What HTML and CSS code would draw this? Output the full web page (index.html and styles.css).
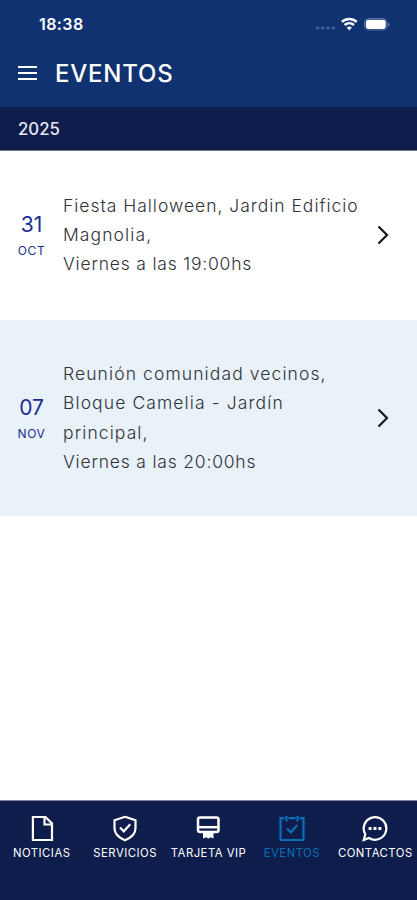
FILE: index.html
```html
<!DOCTYPE html>
<html lang="es">
<head>
    <meta charset="UTF-8">
    <meta name="viewport" content="width=device-width, initial-scale=1.0">
    <title>Eventos</title>
    <link rel="stylesheet" href="styles.css">
</head>
<body>
    <header class="header">
        <div class="status-bar">
            <span class="time">18:38</span>
            <svg class="status-icons" width="74" height="16" viewBox="0 0 74 16">
                <g fill="#41609a">
                    <rect x="0" y="10.5" width="3.2" height="3" rx="1"/>
                    <rect x="5.2" y="10.5" width="3.2" height="3" rx="1"/>
                    <rect x="10.4" y="10.5" width="3.2" height="3" rx="1"/>
                    <rect x="15.6" y="10.5" width="3.2" height="3" rx="1"/>
                </g>
                <g fill="none" stroke="#fff" stroke-width="2.4">
                    <path d="M25.9 5.8a11 11 0 0 1 14.8 0"/>
                    <path d="M28.6 9a7.2 7.2 0 0 1 9.4 0"/>
                </g>
                <path d="M30.7 11.5a4 4 0 0 1 5.2 0l-2.6 2.9z" fill="#fff"/>
                <rect x="48.5" y="2.5" width="22.5" height="11.5" rx="4" fill="none" stroke="#5670a3"/>
                <rect x="49.8" y="3.7" width="20" height="9.2" rx="2.8" fill="#fff"/>
                <path d="M72.3 6.5v4.2c1.5-.8 1.5-3.4 0-4.2z" fill="#8fa1c6"/>
            </svg>
        </div>
        <div class="title-bar">
            <button class="menu-btn" aria-label="Menú">
                <span></span>
                <span></span>
                <span></span>
            </button>
            <h1>EVENTOS</h1>
        </div>
    </header>

    <div class="year">2025</div>

    <main class="events">
        <a class="event">
            <div class="date">
                <span class="day">31</span>
                <span class="month">OCT</span>
            </div>
            <div class="info">
                <p class="long">Fiesta Halloween, Jardin Edificio</p>
                <p>Magnolia,</p>
                <p class="hour">Viernes a las 19:00hs</p>
            </div>
            <svg class="arrow" width="12" height="20" viewBox="0 0 12 20"><path d="M1.5 1.5L10 10l-8.5 8.5"/></svg>
        </a>
        <a class="event event-alt">
            <div class="date">
                <span class="day">07</span>
                <span class="month">NOV</span>
            </div>
            <div class="info">
                <p>Reunión comunidad vecinos,</p>
                <p>Bloque Camelia - Jardín</p>
                <p>principal,</p>
                <p class="hour">Viernes a las 20:00hs</p>
            </div>
            <svg class="arrow" width="12" height="20" viewBox="0 0 12 20"><path d="M1.5 1.5L10 10l-8.5 8.5"/></svg>
        </a>
    </main>

    <nav class="tabs">
        <a class="tab">
            <svg width="28" height="28" viewBox="0 0 28 28">
                <path d="M4.9 3H17.5L24 9.500V26H4.900z"/>
                <path d="M16.5 3v7.500H24"/>
            </svg>
            <span>NOTICIAS</span>
        </a>
        <a class="tab">
            <svg width="28" height="28" viewBox="0 0 28 28">
                <path d="M14 2.800l10.500 3.500v8c0 5.500-4.500 9.500-10.500 12-6-2.500-10.500-6.500-10.500-12v-8z"/>
                <path d="M9 13.500l3.800 3.800 6.400-7"/>
            </svg>
            <span>SERVICIOS</span>
        </a>
        <a class="tab">
            <svg width="28" height="28" viewBox="0 0 28 28">
                <rect x="4" y="3.500" width="20.500" height="14.500" rx="2" stroke-width="2.500"/>
                <path d="M4 13.200h20.500" stroke-width="2.500"/>
                <path d="M9 18h10.500v6.500l-3.200-1.200-2 1.500-2-1.500L9 24.500z" fill="#fff" stroke="none"/>
            </svg>
            <span>TARJETA VIP</span>
        </a>
        <a class="tab active">
            <svg width="28" height="28" viewBox="0 0 28 28">
                <path d="M6.500 4.200H2.500V26h23V4.200H21.500M10.500 4.200h7M8.500 2v5.500M19.500 2v5.500"/>
                <path d="M9 14.500l3.800 3.800 6.400-7"/>
            </svg>
            <span>EVENTOS</span>
        </a>
        <a class="tab">
            <svg width="28" height="28" viewBox="0 0 28 28">
                <path d="M4.300 20.200A11.300 11.300 0 1 1 8 24l-5.200 1.900z"/>
                <path d="M7.600 14.500h3M12.500 14.500h3M17.400 14.500h3" stroke-width="3"/>
            </svg>
            <span>CONTACTOS</span>
        </a>
    </nav>
</body>
</html>
```

FILE: styles.css
```css
* {
    margin: 0;
    padding: 0;
    box-sizing: border-box;
}

body {
    font-family: Inter, 'Liberation Sans', sans-serif;
    display: flex;
    flex-direction: column;
    height: 100vh;
    background: #fff;
    overflow: hidden;
}

/* Header */
.header {
    height: 107px;
    background: #113270;
    color: #fff;
}

.status-bar {
    display: flex;
    justify-content: space-between;
    align-items: center;
    height: 48px;
    padding: 0 27px 0 39px;
}

.time {
    font-size: 16px;
    font-weight: 600;
    letter-spacing: 0.4px;
}

.title-bar {
    display: flex;
    align-items: center;
    height: 50px;
    padding-left: 18px;
    gap: 18px;
}

.menu-btn {
    display: flex;
    flex-direction: column;
    gap: 4px;
    width: 19px;
    border: none;
    background: none;
}

.menu-btn span {
    height: 2px;
    background: #fff;
}

h1 {
    font-size: 24px;
    font-weight: 500;
    letter-spacing: 0.8px;
}

.year {
    height: 44px;
    padding-left: 18px;
    background: #0e1d4c;
    border-bottom: 1px solid #6e7891;
    color: #e6e7ec;
    font-size: 16.8px;
    font-weight: 500;
    line-height: 44px;
}

/* Event list */
.events {
    flex: 1;
}

.event {
    display: flex;
    align-items: center;
    height: 169px;
    padding: 0 28px 2px 0;
}

.event-alt {
    height: 196px;
    padding-bottom: 1px;
    background: #e9f1f9;
}

.date {
    display: flex;
    flex-direction: column;
    align-items: center;
    width: 63px;
    padding-top: 4px;
    color: #1c2d94;
}

.day {
    font-size: 21px;
    line-height: 28px;
}

.month {
    font-size: 12px;
    line-height: 24px;
    letter-spacing: 0.6px;
}

.info {
    flex: 1;
    color: #303238;
    font-size: 17.5px;
    font-weight: 300;
    line-height: 29.2px;
    letter-spacing: 1.1px;
    white-space: nowrap;
}

.info .long {
    letter-spacing: 0.98px;
}

.info .hour {
    letter-spacing: 0.8px;
}

.arrow {
    fill: none;
    stroke: #15171b;
    stroke-width: 2.2;
}

/* Bottom tabs */
.tabs {
    display: grid;
    grid-template-columns: repeat(5, 1fr);
    height: 100px;
    padding-top: 13px;
    background: #0e1d4c;
    border-top: 1px solid #7b839a;
}

.tab {
    display: flex;
    flex-direction: column;
    align-items: center;
    gap: 3px;
    color: #fff;
    font-size: 11.3px;
    line-height: 16px;
    letter-spacing: 0.5px;
    white-space: nowrap;
}

.tab svg {
    fill: none;
    stroke: currentColor;
    stroke-width: 2.2;
}

.tab.active {
    color: #0c71b9;
}
```
